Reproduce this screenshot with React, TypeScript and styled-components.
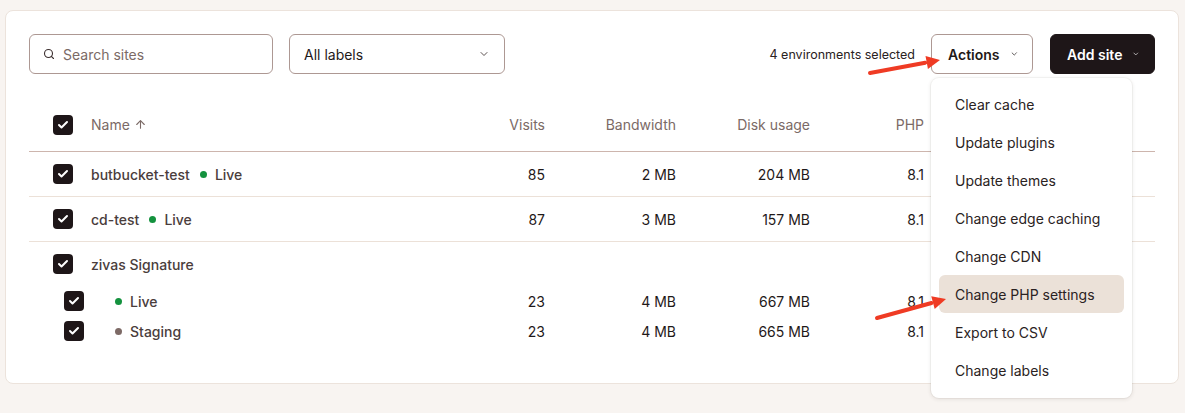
import React from 'react';
import styled, { createGlobalStyle } from 'styled-components';
import { Search, ChevronDown, Check, ArrowUp } from 'lucide-react';

const GlobalStyle = createGlobalStyle`
  html, body {
    margin: 0;
    padding: 0;
    background: #f8f4f1;
    font-family: Inter, "Noto Sans", "Liberation Sans", sans-serif;
    color: #2a2222;
  }
  * { box-sizing: border-box; }
`;

interface SiteEnv {
  label: string;
  live: boolean;
  visits: number;
  bandwidth: string;
  disk: string;
  php: string;
}

interface SiteRow {
  name: string;
  envs: SiteEnv[];
}

const SITES: SiteRow[] = [
  { name: 'butbucket-test', envs: [{ label: 'Live', live: true, visits: 85, bandwidth: '2 MB', disk: '204 MB', php: '8.1' }] },
  { name: 'cd-test', envs: [{ label: 'Live', live: true, visits: 87, bandwidth: '3 MB', disk: '157 MB', php: '8.1' }] },
  {
    name: 'zivas Signature',
    envs: [
      { label: 'Live', live: true, visits: 23, bandwidth: '4 MB', disk: '667 MB', php: '8.1' },
      { label: 'Staging', live: false, visits: 23, bandwidth: '4 MB', disk: '665 MB', php: '8.1' }
    ]
  }
];

const ACTIONS = [
  'Clear cache',
  'Update plugins',
  'Update themes',
  'Change edge caching',
  'Change CDN',
  'Change PHP settings',
  'Export to CSV',
  'Change labels'
];

const Page = styled.div`
  position: relative;
  padding: 10px 6px 30px 5px;
`;

const Card = styled.div`
  background: #ffffff;
  border: 1px solid #ece3dc;
  border-radius: 8px;
  padding: 23px 23px 37px 23px;
`;

const Toolbar = styled.div`
  display: flex;
  align-items: center;
  height: 40px;
  margin-bottom: 24px;
`;

const SearchBox = styled.div`
  width: 244px;
  height: 40px;
  display: flex;
  align-items: center;
  gap: 8px;
  padding-left: 13px;
  border: 1px solid #ad9893;
  border-radius: 6px;
  color: #7b6a66;
  font-size: 14px;
`;

const SelectBox = styled.div`
  width: 216px;
  height: 40px;
  margin-left: 16px;
  display: flex;
  align-items: center;
  justify-content: space-between;
  padding: 0 14px 0 14px;
  border: 1px solid #ad9893;
  border-radius: 6px;
  font-size: 14px;
  color: #1f1919;
`;

const Spacer = styled.div`
  flex: 1;
`;

const SelectedNote = styled.span`
  font-size: 12.5px;
  color: #2a2222;
  margin-right: 16px;
`;

const ActionsWrap = styled.div`
  position: relative;
`;

const Button = styled.button<{ $dark?: boolean }>`
  height: 40px;
  display: flex;
  align-items: center;
  gap: 10px;
  padding: 0 14px 0 16px;
  border-radius: 6px;
  white-space: nowrap;
  font-family: inherit;
  font-size: 14px;
  font-weight: 600;
  cursor: pointer;
  border: 1px solid ${p => (p.$dark ? '#1e1618' : '#ad9893')};
  background: ${p => (p.$dark ? '#1e1618' : '#ffffff')};
  color: ${p => (p.$dark ? '#ffffff' : '#1f1919')};
`;

const ActionsButton = styled(Button)`
  width: 102px;
`;

const AddButton = styled(Button)`
  width: 105px;
  margin-left: 17px;
`;

const Menu = styled.div`
  position: absolute;
  top: 44px;
  left: 0;
  width: 201px;
  padding: 7px 8px 9px;
  background: #ffffff;
  border-radius: 8px;
  box-shadow: 0 1px 4px rgba(60, 40, 30, 0.12), 0 0 0 1px rgba(60, 40, 30, 0.04);
  z-index: 5;
`;

const MenuItem = styled.div<{ $active?: boolean }>`
  height: 38px;
  display: flex;
  align-items: center;
  padding-left: 16px;
  border-radius: 6px;
  font-size: 14px;
  color: #2a2222;
  background: ${p => (p.$active ? '#ebe1d8' : 'transparent')};
`;

const COLS = '62px 354px 100px 131px 134px 114px 1fr';

const HeaderRow = styled.div`
  display: grid;
  grid-template-columns: ${COLS};
  align-items: center;
  height: 54px;
  border-bottom: 1px solid #cdb5ad;
  font-size: 14px;
  color: #7b6a66;
`;

const BodyRow = styled.div<{ $last?: boolean }>`
  display: grid;
  grid-template-columns: ${COLS};
  align-items: center;
  height: 45px;
  border-bottom: ${p => (p.$last ? 'none' : '1px solid #ece1d8')};
  font-size: 14px;
`;

const GroupRow = styled(BodyRow)`
  height: 44px;
  border-bottom: none;
`;

const SubRow = styled(BodyRow)`
  height: 30px;
  border-bottom: none;
`;

const BoxCell = styled.div<{ $indent?: boolean }>`
  display: flex;
  align-items: center;
  padding-left: ${p => (p.$indent ? '35px' : '24px')};
`;

const Checkbox = styled.span`
  width: 20px;
  height: 20px;
  border-radius: 4px;
  background: #1e1618;
  display: inline-flex;
  align-items: center;
  justify-content: center;
  color: #ffffff;
`;

const NameCell = styled.div`
  display: flex;
  align-items: center;
  gap: 6px;
  font-weight: 500;
  color: #4a3d3c;
`;

const SortHead = styled.div`
  display: flex;
  align-items: center;
  gap: 4px;
`;

const NumCell = styled.div`
  text-align: right;
  color: #1f1919;
`;

const HeadCell = styled.div`
  text-align: right;
`;

const EnvTag = styled.span<{ $indent?: boolean }>`
  display: inline-flex;
  align-items: center;
  gap: 8px;
  margin-left: ${p => (p.$indent ? '24px' : '4px')};
`;

const Dot = styled.span<{ $live: boolean }>`
  width: 7px;
  height: 7px;
  border-radius: 50%;
  background: ${p => (p.$live ? '#14923e' : '#7d6a66')};
`;

const Annotations = styled.svg`
  position: absolute;
  top: 0;
  left: 0;
  pointer-events: none;
  z-index: 10;
`;

const Box = () => (
  <Checkbox>
    <Check size={12} strokeWidth={4} />
  </Checkbox>
);

const Arrow: React.FC<{ x1: number; y1: number; x2: number; y2: number }> = ({ x1, y1, x2, y2 }) => {
  const ang = Math.atan2(y2 - y1, x2 - x1);
  const len = 15;
  const spread = 0.45;
  const bx = x2 - len * Math.cos(ang);
  const by = y2 - len * Math.sin(ang);
  const p1 = `${x2},${y2}`;
  const p2 = `${x2 - len * Math.cos(ang - spread)},${y2 - len * Math.sin(ang - spread)}`;
  const p3 = `${x2 - len * Math.cos(ang + spread)},${y2 - len * Math.sin(ang + spread)}`;
  return (
    <g>
      <line x1={x1} y1={y1} x2={bx} y2={by} stroke="#ef3b24" strokeWidth={4} strokeLinecap="round" />
      <polygon points={`${p1} ${p2} ${p3}`} fill="#ef3b24" />
    </g>
  );
};

export default function App() {
  return (
    <>
      <GlobalStyle />
      <Page>
        <Card>
          <Toolbar>
            <SearchBox>
              <Search size={12} strokeWidth={2.2} color="#3a2e2e" />
              Search sites
            </SearchBox>
            <SelectBox>
              All labels
              <ChevronDown size={12} strokeWidth={1.8} color="#4a3d3c" />
            </SelectBox>
            <Spacer />
            <SelectedNote>4 environments selected</SelectedNote>
            <ActionsWrap>
              <ActionsButton>
                Actions
                <ChevronDown size={12} strokeWidth={2} />
              </ActionsButton>
              <Menu>
                {ACTIONS.map(a => (
                  <MenuItem key={a} $active={a === 'Change PHP settings'}>
                    {a}
                  </MenuItem>
                ))}
              </Menu>
            </ActionsWrap>
            <AddButton $dark>
              Add site
              <ChevronDown size={12} strokeWidth={2} />
            </AddButton>
          </Toolbar>

          <HeaderRow>
            <BoxCell>
              <Box />
            </BoxCell>
            <SortHead>
              Name <ArrowUp size={13} strokeWidth={2} />
            </SortHead>
            <HeadCell>Visits</HeadCell>
            <HeadCell>Bandwidth</HeadCell>
            <HeadCell>Disk usage</HeadCell>
            <HeadCell>PHP</HeadCell>
            <div />
          </HeaderRow>

          {SITES.map((site, i) => {
            if (site.envs.length === 1) {
              const env = site.envs[0];
              return (
                <BodyRow key={site.name}>
                  <BoxCell>
                    <Box />
                  </BoxCell>
                  <NameCell>
                    {site.name}
                    <EnvTag>
                      <Dot $live={env.live} />
                      {env.label}
                    </EnvTag>
                  </NameCell>
                  <NumCell>{env.visits}</NumCell>
                  <NumCell>{env.bandwidth}</NumCell>
                  <NumCell>{env.disk}</NumCell>
                  <NumCell>{env.php}</NumCell>
                  <div />
                </BodyRow>
              );
            }
            return (
              <React.Fragment key={site.name}>
                <GroupRow $last={i === SITES.length - 1}>
                  <BoxCell>
                    <Box />
                  </BoxCell>
                  <NameCell>{site.name}</NameCell>
                </GroupRow>
                {site.envs.map(env => (
                  <SubRow key={env.label}>
                    <BoxCell $indent>
                      <Box />
                    </BoxCell>
                    <NameCell>
                      <EnvTag $indent>
                        <Dot $live={env.live} />
                        {env.label}
                      </EnvTag>
                    </NameCell>
                    <NumCell>{env.visits}</NumCell>
                    <NumCell>{env.bandwidth}</NumCell>
                    <NumCell>{env.disk}</NumCell>
                    <NumCell>{env.php}</NumCell>
                    <div />
                  </SubRow>
                ))}
              </React.Fragment>
            );
          })}
        </Card>
        <Annotations width={1185} height={413}>
          <Arrow x1={870} y1={73} x2={940} y2={60} />
          <Arrow x1={877} y1={318} x2={946} y2={299} />
        </Annotations>
      </Page>
    </>
  );
}
